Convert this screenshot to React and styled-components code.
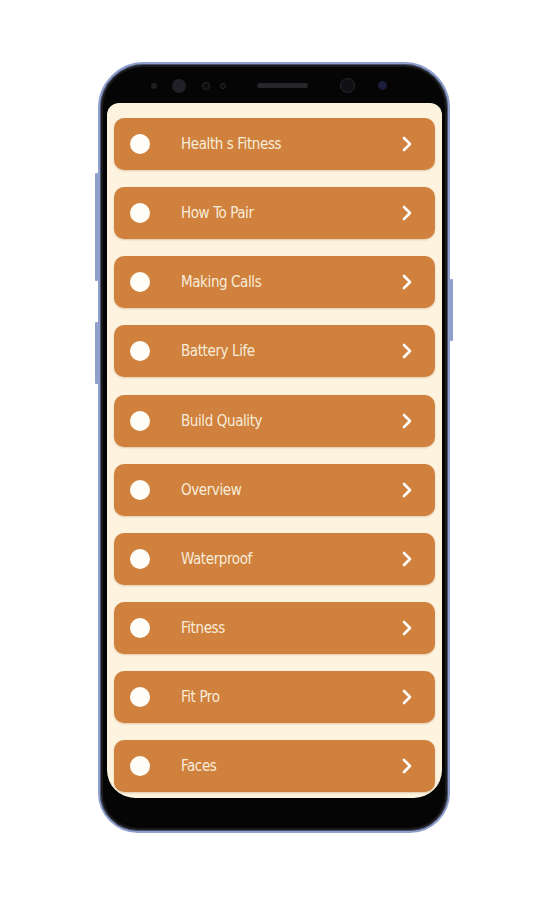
import React from 'react'
import styled, { createGlobalStyle } from 'styled-components'

const GlobalStyle = createGlobalStyle`
  html, body {
    margin: 0;
    padding: 0;
    background: #ffffff;
  }
`

const Page = styled.div`
  width: 548px;
  height: 900px;
  padding-top: 62px;
  padding-left: 98px;
  box-sizing: border-box;
`

const Phone = styled.div`
  position: relative;
  width: 352px;
  height: 771px;
  box-sizing: border-box;
  background: #050505;
  border: 2px solid #8fa0cc;
  border-radius: 46px 46px 40px 40px;
  box-shadow: inset 0 0 0 1px #4a5270, inset 0 0 0 3px #1a1a1a;
  padding: 0 6px 33px 7px;
  display: flex;
  flex-direction: column;
`

const SideKey = styled.div`
  position: absolute;
  width: 3px;
  background: #8fa0cc;
  border-radius: 1px;
  top: ${p => p.top}px;
  height: ${p => p.len}px;
  ${p => (p.right ? 'right: -5px;' : 'left: -5px;')}
`

const Bezel = styled.div`
  height: 39px;
  display: flex;
  align-items: center;
  padding-top: 4px;
  box-sizing: border-box;
`

const Dot = styled.div`
  width: ${p => p.size}px;
  height: ${p => p.size}px;
  border-radius: 50%;
  background: ${p => p.bg || '#1c1c22'};
  border: ${p => (p.ring ? '1px solid #2a2a30' : 'none')};
  box-sizing: border-box;
  margin-left: ${p => p.gap}px;
`

const Speaker = styled.div`
  width: 51px;
  height: 5px;
  border-radius: 3px;
  background: #26262b;
  margin-left: ${p => p.gap}px;
`

const Screen = styled.div`
  flex: 1;
  background: #fdf3df;
  border-radius: 12px 12px 28px 28px;
  padding: 15px 7px 0 7px;
  display: flex;
  flex-direction: column;
  gap: 17.15px;
  overflow: hidden;
`

const Row = styled.div`
  height: 52px;
  flex-shrink: 0;
  background: #cf813d;
  border-radius: 10px;
  display: flex;
  align-items: center;
  padding: 0 22px 0 16px;
  box-shadow: 0 1px 2px rgba(140, 80, 20, 0.25);
`

const Bullet = styled.div`
  width: 20px;
  height: 20px;
  border-radius: 50%;
  background: #fffdf8;
`

const Label = styled.span`
  flex: 1;
  margin-left: 31px;
  color: #f8ecda;
  font-family: "DejaVu Sans Condensed", "Roboto Condensed", Roboto, sans-serif;
  font-size: 15px;
  letter-spacing: -0.4px;
`

const Chevron = () => (
  <svg width="12" height="16" viewBox="0 0 12 16">
    <polyline points="3,2 9,8 3,14" fill="none" stroke="#ffffff" strokeWidth="2.6" strokeLinecap="round" strokeLinejoin="round" />
  </svg>
)

const items = [
  'Health s Fitness',
  'How To Pair',
  'Making Calls',
  'Battery Life',
  'Build Quality',
  'Overview',
  'Waterproof',
  'Fitness',
  'Fit Pro',
  'Faces',
]

export default function App() {
  return (
    <Page>
      <GlobalStyle />
      <Phone>
        <SideKey top={109} len={108} />
        <SideKey top={258} len={62} />
        <SideKey right top={215} len={62} />
        <Bezel>
          <Dot size={6} gap={44} bg="#1e1e22" />
          <Dot size={14} gap={15} bg="#202026" />
          <Dot size={8} gap={16} ring bg="#0c0c0e" />
          <Dot size={6} gap={10} ring bg="#0c0c0e" />
          <Speaker gap={31} />
          <Dot size={15} gap={32} ring bg="#101014" />
          <Dot size={9} gap={23} bg="#1b1d3a" />
        </Bezel>
        <Screen>
          {items.map(t => (
            <Row key={t}>
              <Bullet />
              <Label>{t}</Label>
              <Chevron />
            </Row>
          ))}
        </Screen>
      </Phone>
    </Page>
  )
}
